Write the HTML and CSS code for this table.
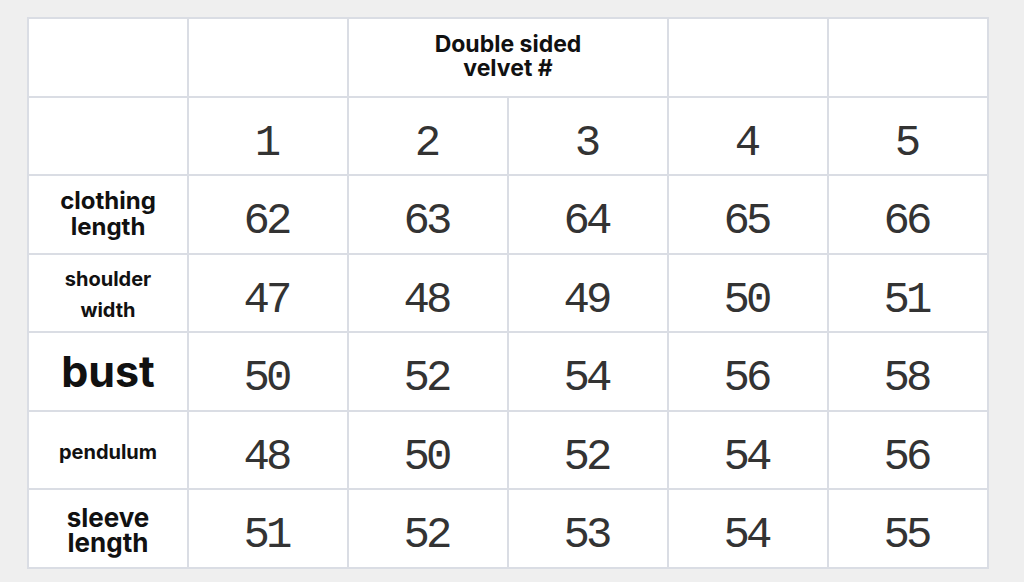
FILE: index.html
```html
<!DOCTYPE html>
<html>
<head>
<meta charset="utf-8">
<link rel="stylesheet" href="styles.css">
</head>
<body>
<table class="size">
  <tr>
    <td class="lbl"></td>
    <td></td>
    <td colspan="2" class="head">Double sided<br>velvet #</td>
    <td></td>
    <td></td>
  </tr>
  <tr>
    <td class="lbl"></td>
    <td class="num">1</td><td class="num">2</td><td class="num">3</td><td class="num">4</td><td class="num">5</td>
  </tr>
  <tr>
    <td class="lbl l-clothing">clothing<br>length</td>
    <td class="num">62</td><td class="num">63</td><td class="num">64</td><td class="num">65</td><td class="num">66</td>
  </tr>
  <tr>
    <td class="lbl l-shoulder">shoulder<br>width</td>
    <td class="num">47</td><td class="num">48</td><td class="num">49</td><td class="num">50</td><td class="num">51</td>
  </tr>
  <tr>
    <td class="lbl l-bust">bust</td>
    <td class="num">50</td><td class="num">52</td><td class="num">54</td><td class="num">56</td><td class="num">58</td>
  </tr>
  <tr>
    <td class="lbl l-pendulum">pendulum</td>
    <td class="num">48</td><td class="num">50</td><td class="num">52</td><td class="num">54</td><td class="num">56</td>
  </tr>
  <tr>
    <td class="lbl l-sleeve">sleeve<br>length</td>
    <td class="num">51</td><td class="num">52</td><td class="num">53</td><td class="num">54</td><td class="num">55</td>
  </tr>
</table>
</body>
</html>
```

FILE: styles.css
```css
html, body {
  margin: 0;
  padding: 0;
  background: #efefef;
}
body {
  padding: 17px 0 0 27px;
}
.size {
  border-collapse: collapse;
  background: #ffffff;
  width: 962px;
  table-layout: fixed;
  border: 2px solid #d6dae2;
}
.size tr {
  height: 78.5px;
}
.size td {
  border: 2px solid #dadde4;
  padding: 0;
  text-align: center;
  vertical-align: middle;
  color: #111111;
  font-family: "Inter", "Noto Sans", sans-serif;
  font-weight: 700;
}
.size .head {
  font-size: 23px;
  line-height: 24px;
  padding-bottom: 2px;
}
.size .num {
  font-family: "Liberation Mono", monospace;
  font-weight: 400;
  font-size: 44px;
  line-height: 48px;
  letter-spacing: -4px;
  text-indent: -4px;
  color: #333333;
  padding-top: 14px;
}
.size .l-clothing {
  font-size: 24px;
  line-height: 26px;
}
.size .l-shoulder {
  font-size: 20px;
  line-height: 31px;
  padding-top: 4px;
}
.size .l-bust {
  font-size: 43px;
  line-height: 46px;
}
.size .l-pendulum {
  font-size: 20px;
  padding-top: 4px;
}
.size .l-sleeve {
  font-size: 26px;
  line-height: 25px;
  padding-top: 3px;
}
```
